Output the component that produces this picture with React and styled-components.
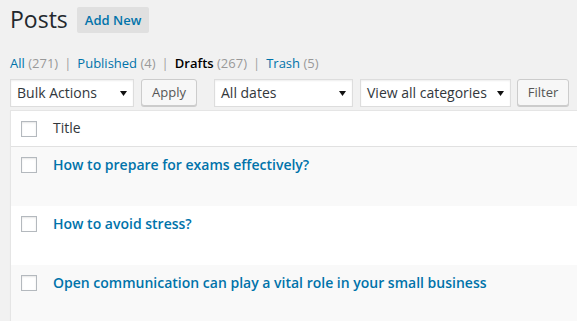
import React from "react";
import styled, { createGlobalStyle } from "styled-components";

const GlobalStyle = createGlobalStyle`
  body {
    margin: 0;
    background: #f1f1f1;
    font-family: "Open Sans", "Liberation Sans", sans-serif;
    color: #444;
    overflow: hidden;
  }
`;

const Wrap = styled.div`
  padding-left: 10px;
  overflow: hidden;
`;

const Heading = styled.div`
  display: flex;
  align-items: flex-start;
  h1 {
    margin: 0;
    padding-top: 5px;
    font-size: 23px;
    line-height: 29px;
    font-weight: 400;
    color: #23282d;
  }
`;

const AddNew = styled.a`
  margin: 7px 0 0 9px;
  padding: 4px 8px;
  border-radius: 2px;
  background: #e0e0e0;
  color: #0073aa;
  font-size: 13px;
  font-weight: 600;
  line-height: 18px;
  text-decoration: none;
`;

const StatusList = styled.ul`
  display: flex;
  margin: 20px 0 0;
  padding: 0;
  list-style: none;
  font-size: 13px;
  line-height: 18px;
  color: #999;
`;

const StatusLink = styled.a`
  color: ${(p) => (p.$current ? "#000" : "#0073aa")};
  font-weight: ${(p) => (p.$current ? 600 : 400)};
  text-decoration: none;
  span {
    color: #999;
    font-weight: 400;
  }
`;

const Sep = styled.span`
  padding: 0 6px;
  color: #a0a0a0;
`;

const Toolbar = styled.div`
  display: flex;
  align-items: flex-start;
  margin-top: 7px;
  height: 28px;
`;

const Dropdown = styled.div`
  box-sizing: border-box;
  display: flex;
  align-items: center;
  justify-content: space-between;
  width: ${(p) => p.$width}px;
  height: 28px;
  margin-right: ${(p) => p.$gap || 0}px;
  padding: 0 6px;
  background: #fff;
  border: 1px solid #ddd;
  box-shadow: inset 0 1px 2px rgba(0, 0, 0, 0.07);
  color: #32373c;
  font-size: 14px;
  line-height: 26px;
  svg {
    flex: none;
  }
`;

const Button = styled.button`
  box-sizing: border-box;
  width: ${(p) => p.$width}px;
  height: 27px;
  margin-right: ${(p) => p.$gap || 0}px;
  padding: 0;
  background: #f7f7f7;
  border: 1px solid #ccc;
  border-radius: 3px;
  box-shadow: 0 1px 0 #ccc;
  color: #555;
  font-family: inherit;
  font-size: 13px;
  line-height: 25px;
`;

const Table = styled.div`
  margin: 3px -40px 0 0;
  background: #fff;
  border: 1px solid #e5e5e5;
  box-shadow: 0 1px 1px rgba(0, 0, 0, 0.04);
`;

const Row = styled.div`
  display: grid;
  grid-template-columns: 42px 1fr;
  height: ${(p) => (p.$head ? 35 : 59)}px;
  background: ${(p) => (p.$alt ? "#f9f9f9" : "#fff")};
  border-bottom: ${(p) => (p.$head ? "1px solid #e1e1e1" : "none")};
`;

const CheckCell = styled.div`
  padding: 10px 0 0 10px;
`;

const Check = styled.span`
  display: block;
  box-sizing: border-box;
  width: 16px;
  height: 16px;
  background: #fff;
  border: 1px solid #b4b9be;
  box-shadow: inset 0 1px 2px rgba(0, 0, 0, 0.1);
`;

const TitleCell = styled.div`
  padding-top: ${(p) => (p.$head ? 7 : 8)}px;
  font-size: 14px;
  line-height: 19.6px;
  color: #32373c;
  white-space: nowrap;
`;

const PostLink = styled.a`
  color: #0073aa;
  font-weight: 600;
  text-decoration: none;
`;

const Arrow = () => (
  <svg width="7" height="5" viewBox="0 0 7 5">
    <path d="M0 0h7L3.5 5z" fill="#111" />
  </svg>
);

const statuses = [
  { label: "All", count: 271 },
  { label: "Published", count: 4 },
  { label: "Drafts", count: 267, current: true },
  { label: "Trash", count: 5 },
];

const posts = [
  "How to prepare for exams effectively?",
  "How to avoid stress?",
  "Open communication can play a vital role in your small business",
];

export default function App() {
  return (
    <>
      <GlobalStyle />
      <Wrap>
        <Heading>
          <h1>Posts</h1>
          <AddNew href="#">Add New</AddNew>
        </Heading>

        <StatusList>
          {statuses.map((s, i) => (
            <li key={s.label}>
              <StatusLink href="#" $current={s.current}>
                {s.label} <span>({s.count})</span>
              </StatusLink>
              {i < statuses.length - 1 && <Sep>|</Sep>}
            </li>
          ))}
        </StatusList>

        <Toolbar>
          <Dropdown $width={124} $gap={7}>
            Bulk Actions <Arrow />
          </Dropdown>
          <Button $width={56} $gap={17}>Apply</Button>
          <Dropdown $width={139} $gap={7}>
            All dates <Arrow />
          </Dropdown>
          <Dropdown $width={151} $gap={6}>
            View all categories <Arrow />
          </Dropdown>
          <Button $width={52}>Filter</Button>
        </Toolbar>

        <Table>
          <Row $head>
            <CheckCell>
              <Check />
            </CheckCell>
            <TitleCell $head>Title</TitleCell>
          </Row>
          {posts.map((title, i) => (
            <Row key={title} $alt={i % 2 === 0}>
              <CheckCell>
                <Check />
              </CheckCell>
              <TitleCell>
                <PostLink href="#">{title}</PostLink>
              </TitleCell>
            </Row>
          ))}
        </Table>
      </Wrap>
    </>
  );
}
